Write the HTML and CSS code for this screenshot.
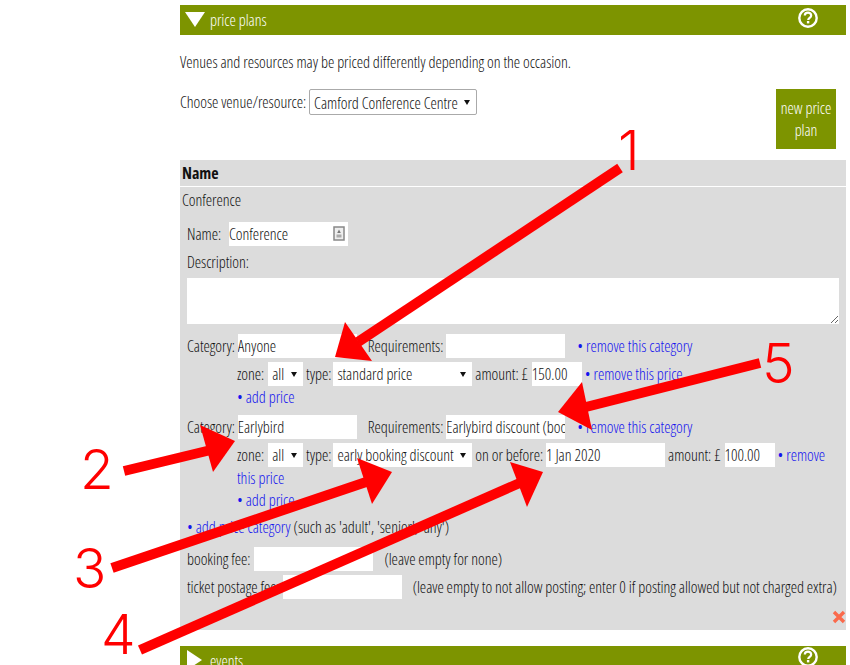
FILE: index.html
```html
<!DOCTYPE html>
<html lang="en">
<head>
<meta charset="utf-8">
<title>Price plans</title>
<link rel="stylesheet" href="styles.css">
</head>
<body>
<main class="page">
  <section class="bar">
    <svg class="tri" width="20" height="15" viewBox="0 0 20 15"><polygon points="0,0 20,0 10,15" fill="#fff"/></svg>
    <span class="bar-title">price plans</span>
    <svg class="help" width="22" height="22" viewBox="0 0 22 22"><circle cx="11" cy="11" r="8.7" fill="none" stroke="#fff" stroke-width="2.4"/><path d="M7.8 8.6c0-2 1.4-3 3.2-3s3.2 1 3.2 2.8c0 2.4-3 2.4-3 4.6" fill="none" stroke="#fff" stroke-width="2.2"/><rect x="9.9" y="14" width="2.4" height="2.4" fill="#fff"/></svg>
  </section>
  <p class="intro">Venues and resources may be priced differently depending on the occasion.</p>
  <div class="choose">
    <div class="choose-left">Choose venue/resource:
      <span class="venue-wrap"><select class="venue"><option>Camford Conference Centre</option></select></span>
    </div>
    <div class="new-plan">new price plan</div>
  </div>
  <section class="plans">
    <div class="plans-head">Name</div>
    <div class="plans-name">Conference</div>
    <div class="plan-body">
      <div class="name-row">Name:
        <span class="name-wrap"><input class="field f119" value="Conference"><svg class="key" width="12" height="15" viewBox="0 0 12 15"><rect x="1" y="1" width="10" height="13" fill="#eee" stroke="#888" stroke-width="1.500"/><path d="M6 3.500l1.800 3.500H4.200z" fill="#777"/><path d="M3.500 8.500h5v3h-5z" fill="#aaa"/></svg></span>
      </div>
      <div class="desc-label">Description:</div>
      <textarea class="desc"></textarea>
      <div class="cat">Category: <input class="field f119" value="Anyone"><span class="req">Requirements:</span> <input class="field f119"><a class="lnk first" href="#">• remove this category</a></div>
      <div class="prices">
        zone: <span class="sel s35"><span>all</span></span> type: <span class="sel s139"><span>standard price</span></span> amount: £ <input class="field f50" value="150.00"> <a class="lnk" href="#">• remove this price</a>
        <div class="add"><a class="lnk" href="#">• add price</a></div>
      </div>
      <div class="cat second">Category: <input class="field f119" value="Earlybird"><span class="req">Requirements:</span> <input class="field f119" value="Earlybird discount (booking)"><a class="lnk first" href="#">• remove this category</a></div>
      <div class="prices">
        zone: <span class="sel s35"><span>all</span></span> type: <span class="sel s139"><span>early booking discount</span></span> on or before: <input class="field f119" value="1 Jan 2020"><span class="amt">amount: £</span> <input class="field f50" value="100.00"> <a class="lnk" href="#">• remove this price</a>
        <div class="add"><a class="lnk" href="#">• add price</a></div>
      </div>
      <div class="add-cat"><a class="lnk" href="#">• add price category</a> (such as 'adult', 'senior', 'any')</div>
      <div class="fee">booking fee: <input class="field f119 fee-first"><span class="hint">(leave empty for none)</span></div>
      <div class="fee tight">ticket postage fee: <input class="field f119"><span class="hint">(leave empty to not allow posting; enter 0 if posting allowed but not charged extra)</span></div>
    </div>
    <div class="del"><svg class="del-icon" width="14" height="14" viewBox="0 0 14 14"><path d="M2 2l10 10M12 2L2 12" stroke="#fa6a4c" stroke-width="3.400"/></svg></div>
  </section>
  <section class="bar events">
    <svg class="tri" width="15" height="20" viewBox="0 0 15 20"><polygon points="0,0 15,10 0,20" fill="#fff"/></svg>
    <span class="bar-title">events</span>
    <svg class="help" width="22" height="22" viewBox="0 0 22 22"><circle cx="11" cy="11" r="8.7" fill="none" stroke="#fff" stroke-width="2.4"/><path d="M7.8 8.6c0-2 1.400-3 3.200-3s3.200 1 3.200 2.800c0 2.400-3 2.400-3 4.600" fill="none" stroke="#fff" stroke-width="2.2"/><rect x="9.9" y="14" width="2.4" height="2.4" fill="#fff"/></svg>
  </section>
</main>
<svg class="marks" width="850" height="665" viewBox="0 0 850 665">
  <g fill="#f00" stroke="none">
    <polygon points="335,357 345,322 372,361"/>
    <polygon points="200,425 235,441 213,472"/>
    <polygon points="357,458 392,472 372,504"/>
    <polygon points="510,462 543,472 527,507"/>
    <polygon points="558,412 582,382 592,430"/>
  </g>
  <g stroke="#f00" stroke-width="10" fill="none">
    <path d="M620 168L358 342"/>
    <path d="M124 471L215 449"/>
    <path d="M112 568L372 480"/>
    <path d="M140 650L522 482"/>
    <path d="M760 363L578 409"/>
  </g>
  <g class="nums" fill="#f00">
    <text x="618" y="170">1</text>
    <text x="762" y="383">5</text>
    <text x="80" y="489">2</text>
    <text x="73" y="588">3</text>
    <text x="101" y="654">4</text>
  </g>
</svg>
</body>
</html>
```
FILE: styles.css
```css
* { box-sizing: border-box; }
html, body { margin: 0; padding: 0; height: 665px; overflow: hidden; background: #fff; }
body {
  position: relative;
  font-family: "Open Sans", "Liberation Sans", sans-serif;
  font-stretch: 75%;
  font-size: 16px;
  font-weight: 300;
  letter-spacing: -0.04px;
  color: #111;
}
.page { width: 666px; margin-left: 180px; padding-top: 5px; }
.bar {
  height: 30px;
  background: #7d9400;
  color: #fff;
  display: flex;
  align-items: center;
  padding: 0 27px 0 5px;
}
.tri { flex: none; margin-right: 5px; margin-top: -1px; }
.bar-title { flex: 1; }
.help { margin-top: -4px; }
.intro { margin: 15px 0 0; line-height: 24px; }
.choose { display: flex; justify-content: space-between; margin-top: 15px; height: 71px; padding-right: 10px; }
.choose-left { height: 26px; line-height: 26px; }
.venue-wrap { position: relative; display: inline-block; vertical-align: top; }
.venue-wrap::after {
  content: ""; position: absolute; right: 7px; top: 11px;
  border-left: 3.5px solid transparent; border-right: 3.5px solid transparent; border-top: 5px solid #111;
}
.venue {
  appearance: none;
  font: inherit; font-stretch: inherit; letter-spacing: inherit; color: #111;
  display: block;
  height: 26px; width: 168px; background: #fff;
  border: 1px solid #aaa; border-radius: 2px; padding: 0 0 2px 4px;
}
.new-plan {
  width: 60px; height: 60px; background: #7d9400; color: #fff;
  display: flex; align-items: center; text-align: center; line-height: 22px;
}
.plans { background: #dcdcdc; height: 470px; position: relative; }
.plans-head { height: 27px; font-weight: 700; line-height: 26px; padding-left: 2px; border-bottom: 1px solid #fff; }
.plans-name { height: 25px; padding-left: 2px; line-height: 26px; }
.plan-body { padding: 0 7px; }
.name-row { margin-top: 10px; height: 24px; line-height: 24px; }
.name-wrap { position: relative; display: inline-block; margin-left: 5px; }
.key { position: absolute; right: 3px; top: 4px; }
.field {
  font: inherit; font-stretch: inherit; letter-spacing: inherit; color: #111;
  border: 0; background: #fff; height: 24px; padding: 0; margin: 0;
}
.f119 { width: 119px; }
.f50 { width: 50px; margin-left: 1px; }
.fee-first { margin-left: 1px; }
.desc-label { margin-top: 4px; height: 28px; line-height: 24px; }
.desc { display: block; width: 652px; height: 46px; border: 0; background: #fff; margin: 0; }
.cat { margin-top: 10px; height: 24px; line-height: 24px; white-space: nowrap; }
.cat.second { margin-top: 7px; }
.req { margin-left: 11px; }
.first { margin-left: 12px; }
.lnk { color: #1414ee; text-decoration: none; }
.prices { margin-top: 4px; padding-left: 50px; line-height: 22px; }
.sel {
  display: inline-block; height: 24px; line-height: 24px; background: #fff;
  padding-left: 4px; position: relative;
}
.sel::after {
  content: ""; position: absolute; right: 6px; top: 10px;
  border-left: 3.5px solid transparent; border-right: 3.5px solid transparent; border-top: 5px solid #111;
}
.s35 { width: 35px; margin-left: 1px; }
.s139 { width: 139px; margin-left: -1px; }
.amt { margin-left: 3px; }
.add { height: 22px; }
.add-cat { margin-top: 5px; height: 22px; line-height: 22px; }
.fee { margin-top: 9px; height: 24px; line-height: 24px; white-space: nowrap; }
.fee.tight { margin-top: 4px; }
.hint { margin-left: 11px; }
.del { position: absolute; right: 0; bottom: 6px; height: 14px; }
.del-icon { display: block; }
.events { margin-top: 16px; align-items: flex-start; padding: 4px 27px 0 7px; overflow: hidden; }
.events .tri { margin-right: 8px; margin-top: 0; }
.marks { position: absolute; left: 0; top: 0; pointer-events: none; }
.nums text { font-family: "Inter", sans-serif; font-stretch: 100%; font-size: 55px; font-weight: 300; letter-spacing: 0; }
```
